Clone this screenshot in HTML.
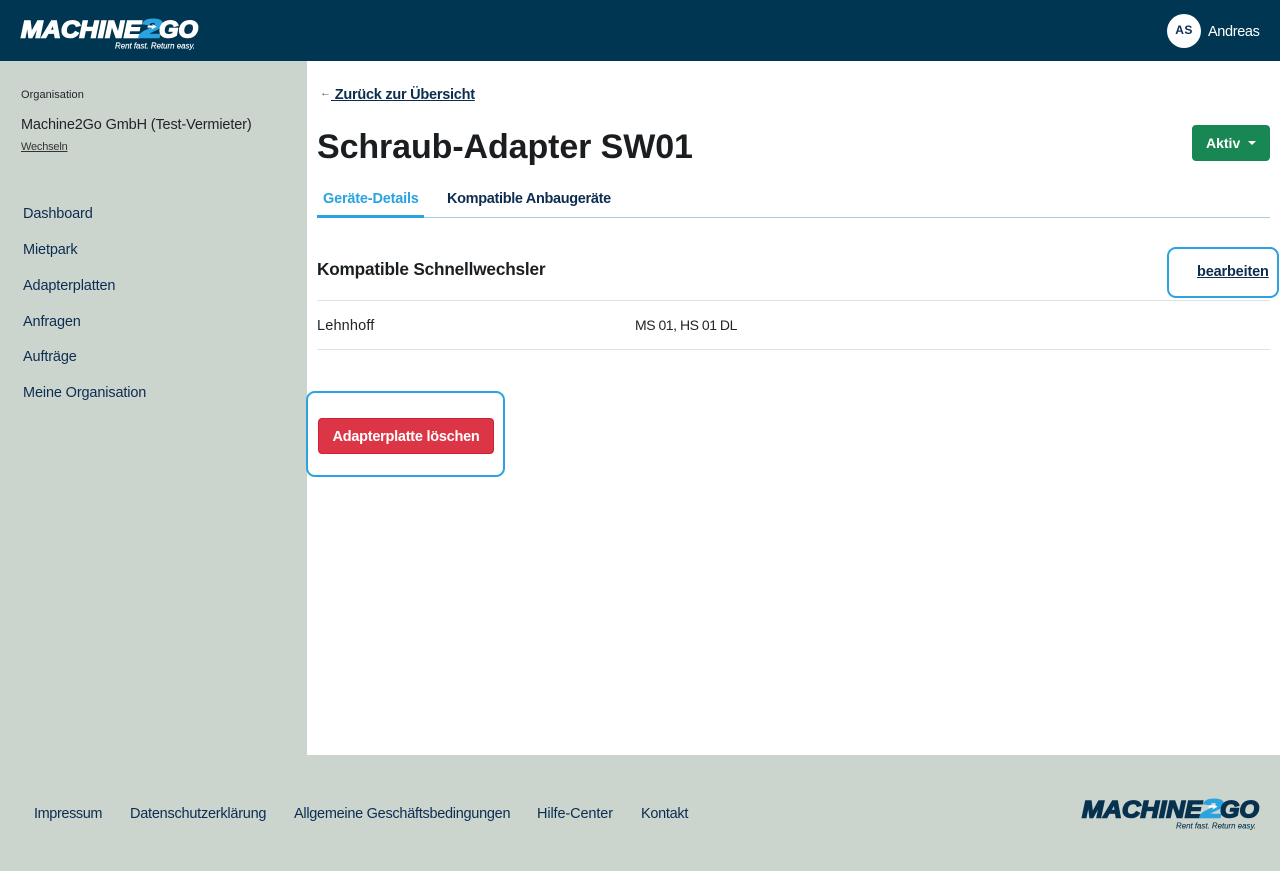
<!DOCTYPE html>
<html lang="de">
<head>
<meta charset="utf-8">
<title>Schraub-Adapter SW01</title>
<style>
html,body{margin:0;padding:0;width:1280px;height:871px;overflow:hidden;background:#fff}
body{position:relative;font-family:"Liberation Sans",sans-serif;color:#212529}
.t{position:absolute;white-space:nowrap;line-height:20px;height:20px;text-decoration:none}
.box{position:absolute;box-sizing:border-box}
header{position:absolute;left:0;top:0;width:1280px;height:61px;background:#003652}
aside{position:absolute;left:0;top:61px;width:307px;height:694px;background:#cbd5ce}
footer{position:absolute;left:0;top:755px;width:1280px;height:116px;background:#cbd5ce}
.nav{font-size:14.5px;color:#0c2c50;left:23px;letter-spacing:-.14px}
.foot{font-size:14.5px;color:#0c2c50;top:804px}
svg{position:absolute;display:block}
svg text{font-family:"Liberation Sans",sans-serif}
</style>
</head>
<body>
<header></header>
<aside></aside>
<footer></footer>

<svg style="left:18px;top:12px" width="184" height="42" viewBox="0 0 184 42">
  <text x="3" y="25.5" font-size="24.5" font-weight="700" font-style="italic" fill="#fff" stroke="#fff" stroke-width="1.6" textLength="120" lengthAdjust="spacingAndGlyphs">MACHINE</text>
  <text x="122" y="25.5" font-size="26" font-weight="700" font-style="italic" fill="#2aa3e0" stroke="#2aa3e0" stroke-width="1.6" textLength="22" lengthAdjust="spacingAndGlyphs">2</text>
  <path d="M130 13.5h5l-1-1.8 4.5 3-5 2.8 .8-1.9h-5z" fill="#fff"/>
  <text x="141" y="25.5" font-size="24.5" font-weight="700" font-style="italic" fill="#fff" stroke="#fff" stroke-width="1.6" textLength="39" lengthAdjust="spacingAndGlyphs">GO</text>
  <text x="97" y="36.5" font-size="8.5" font-style="italic" fill="#fff" stroke="#fff" stroke-width=".15" textLength="80" lengthAdjust="spacingAndGlyphs">Rent fast. Return easy.</text>
</svg>

<div class="box" style="left:1167px;top:14px;width:34px;height:34px;border-radius:50%;background:#fff"></div>
<div class="t" style="left:1167px;top:20px;width:34px;text-align:center;font-size:12px;font-weight:700;color:#0c2c50;letter-spacing:.4px">AS</div>
<div class="t" style="left:1208px;top:22px;font-size:14.5px;color:#fff;letter-spacing:-.36px">Andreas</div>

<div class="t" style="left:21px;top:85px;font-size:11px;color:#212529;letter-spacing:.04px">Organisation</div>
<div class="t" style="left:21px;top:115px;font-size:14.5px;color:#212529;letter-spacing:-.15px">Machine2Go GmbH (Test-Vermieter)</div>
<a class="t" style="left:21px;top:137px;font-size:11px;color:#333;text-decoration:underline;letter-spacing:-.2px">Wechseln</a>

<a class="t nav" style="top:204px">Dashboard</a>
<a class="t nav" style="top:240px">Mietpark</a>
<a class="t nav" style="top:276px">Adapterplatten</a>
<a class="t nav" style="top:312px">Anfragen</a>
<a class="t nav" style="top:347px">Aufträge</a>
<a class="t nav" style="top:383px">Meine Organisation</a>

<div class="t" style="left:320px;top:83px;font-size:11px;color:#555">←</div>
<a class="t" style="left:331px;top:85px;font-size:14.5px;font-weight:700;color:#0c2c50;text-decoration:underline;letter-spacing:-.25px">&nbsp;Zurück zur Übersicht</a>

<h1 class="t" style="margin:0;left:317px;top:127px;height:40px;line-height:40px;font-size:34px;font-weight:700;color:#1a1e21;letter-spacing:-.1px">Schraub-Adapter SW01</h1>

<div class="box" style="left:1192px;top:125px;width:78px;height:36px;background:#198754;border-radius:4px"></div>
<div class="t" style="left:1206px;top:133px;font-size:14px;font-weight:700;color:#fff">Aktiv</div>
<div class="box" style="left:1248px;top:141px;width:0;height:0;border-left:4px solid transparent;border-right:4px solid transparent;border-top:4px solid #fff"></div>

<div class="t" style="left:323px;top:189px;font-size:14.5px;font-weight:700;color:#2aa3e0;letter-spacing:-.19px">Geräte-Details</div>
<div class="t" style="left:447px;top:189px;font-size:14.5px;font-weight:700;color:#0c2c50;letter-spacing:-.33px">Kompatible Anbaugeräte</div>
<div class="box" style="left:317px;top:217px;width:953px;height:1px;background:#a6cde6"></div>
<div class="box" style="left:317px;top:215px;width:107px;height:3px;background:#2aa3e0"></div>

<div class="t" style="left:317px;top:259px;font-size:17.2px;font-weight:700;color:#1a1e21;letter-spacing:-.18px">Kompatible Schnellwechsler</div>
<div class="box" style="left:1167px;top:247px;width:112px;height:51px;border:2px solid #2aa3e0;border-radius:9px"></div>
<a class="t" style="left:1197px;top:262px;font-size:14.5px;font-weight:700;color:#0c2c50;text-decoration:underline;letter-spacing:-.16px">bearbeiten</a>

<div class="box" style="left:317px;top:300px;width:953px;height:1px;background:#dee2e6"></div>
<div class="t" style="left:317px;top:316px;font-size:14.5px;color:#212529;letter-spacing:.16px">Lehnhoff</div>
<div class="t" style="left:635px;top:315px;font-size:14px;color:#212529;letter-spacing:-.47px">MS 01, HS 01 DL</div>
<div class="box" style="left:317px;top:349px;width:953px;height:1px;background:#dee2e6"></div>

<div class="box" style="left:306px;top:391px;width:199px;height:86px;border:2px solid #2aa3e0;border-radius:9px"></div>
<div class="box" style="left:318px;top:418px;width:176px;height:36px;background:#dc3545;border:1px solid #d31f35;border-radius:4px"></div>
<div class="t" style="left:318px;top:427px;width:176px;text-align:center;font-size:14.5px;font-weight:700;color:#fff;letter-spacing:-.25px">Adapterplatte löschen</div>

<a class="t foot" style="left:34px;letter-spacing:-.4px">Impressum</a>
<a class="t foot" style="left:130px;letter-spacing:-.24px">Datenschutzerklärung</a>
<a class="t foot" style="left:294px;letter-spacing:-.28px">Allgemeine Geschäftsbedingungen</a>
<a class="t foot" style="left:537px;letter-spacing:-.12px">Hilfe-Center</a>
<a class="t foot" style="left:641px;letter-spacing:-.3px">Kontakt</a>

<svg style="left:1079px;top:792px" width="184" height="42" viewBox="0 0 184 42">
  <text x="3" y="25.5" font-size="24.5" font-weight="700" font-style="italic" fill="#06324f" stroke="#06324f" stroke-width="1.6" textLength="120" lengthAdjust="spacingAndGlyphs">MACHINE</text>
  <text x="122" y="25.5" font-size="26" font-weight="700" font-style="italic" fill="#2aa3e0" stroke="#2aa3e0" stroke-width="1.6" textLength="22" lengthAdjust="spacingAndGlyphs">2</text>
  <path d="M130 13.5h5l-1-1.8 4.5 3-5 2.8 .8-1.9h-5z" fill="#fff"/>
  <text x="141" y="25.5" font-size="24.5" font-weight="700" font-style="italic" fill="#06324f" stroke="#06324f" stroke-width="1.6" textLength="39" lengthAdjust="spacingAndGlyphs">GO</text>
  <text x="97" y="36.5" font-size="8.5" font-style="italic" fill="#06324f" stroke="#06324f" stroke-width=".1" textLength="80" lengthAdjust="spacingAndGlyphs">Rent fast. Return easy.</text>
</svg>
</body>
</html>
